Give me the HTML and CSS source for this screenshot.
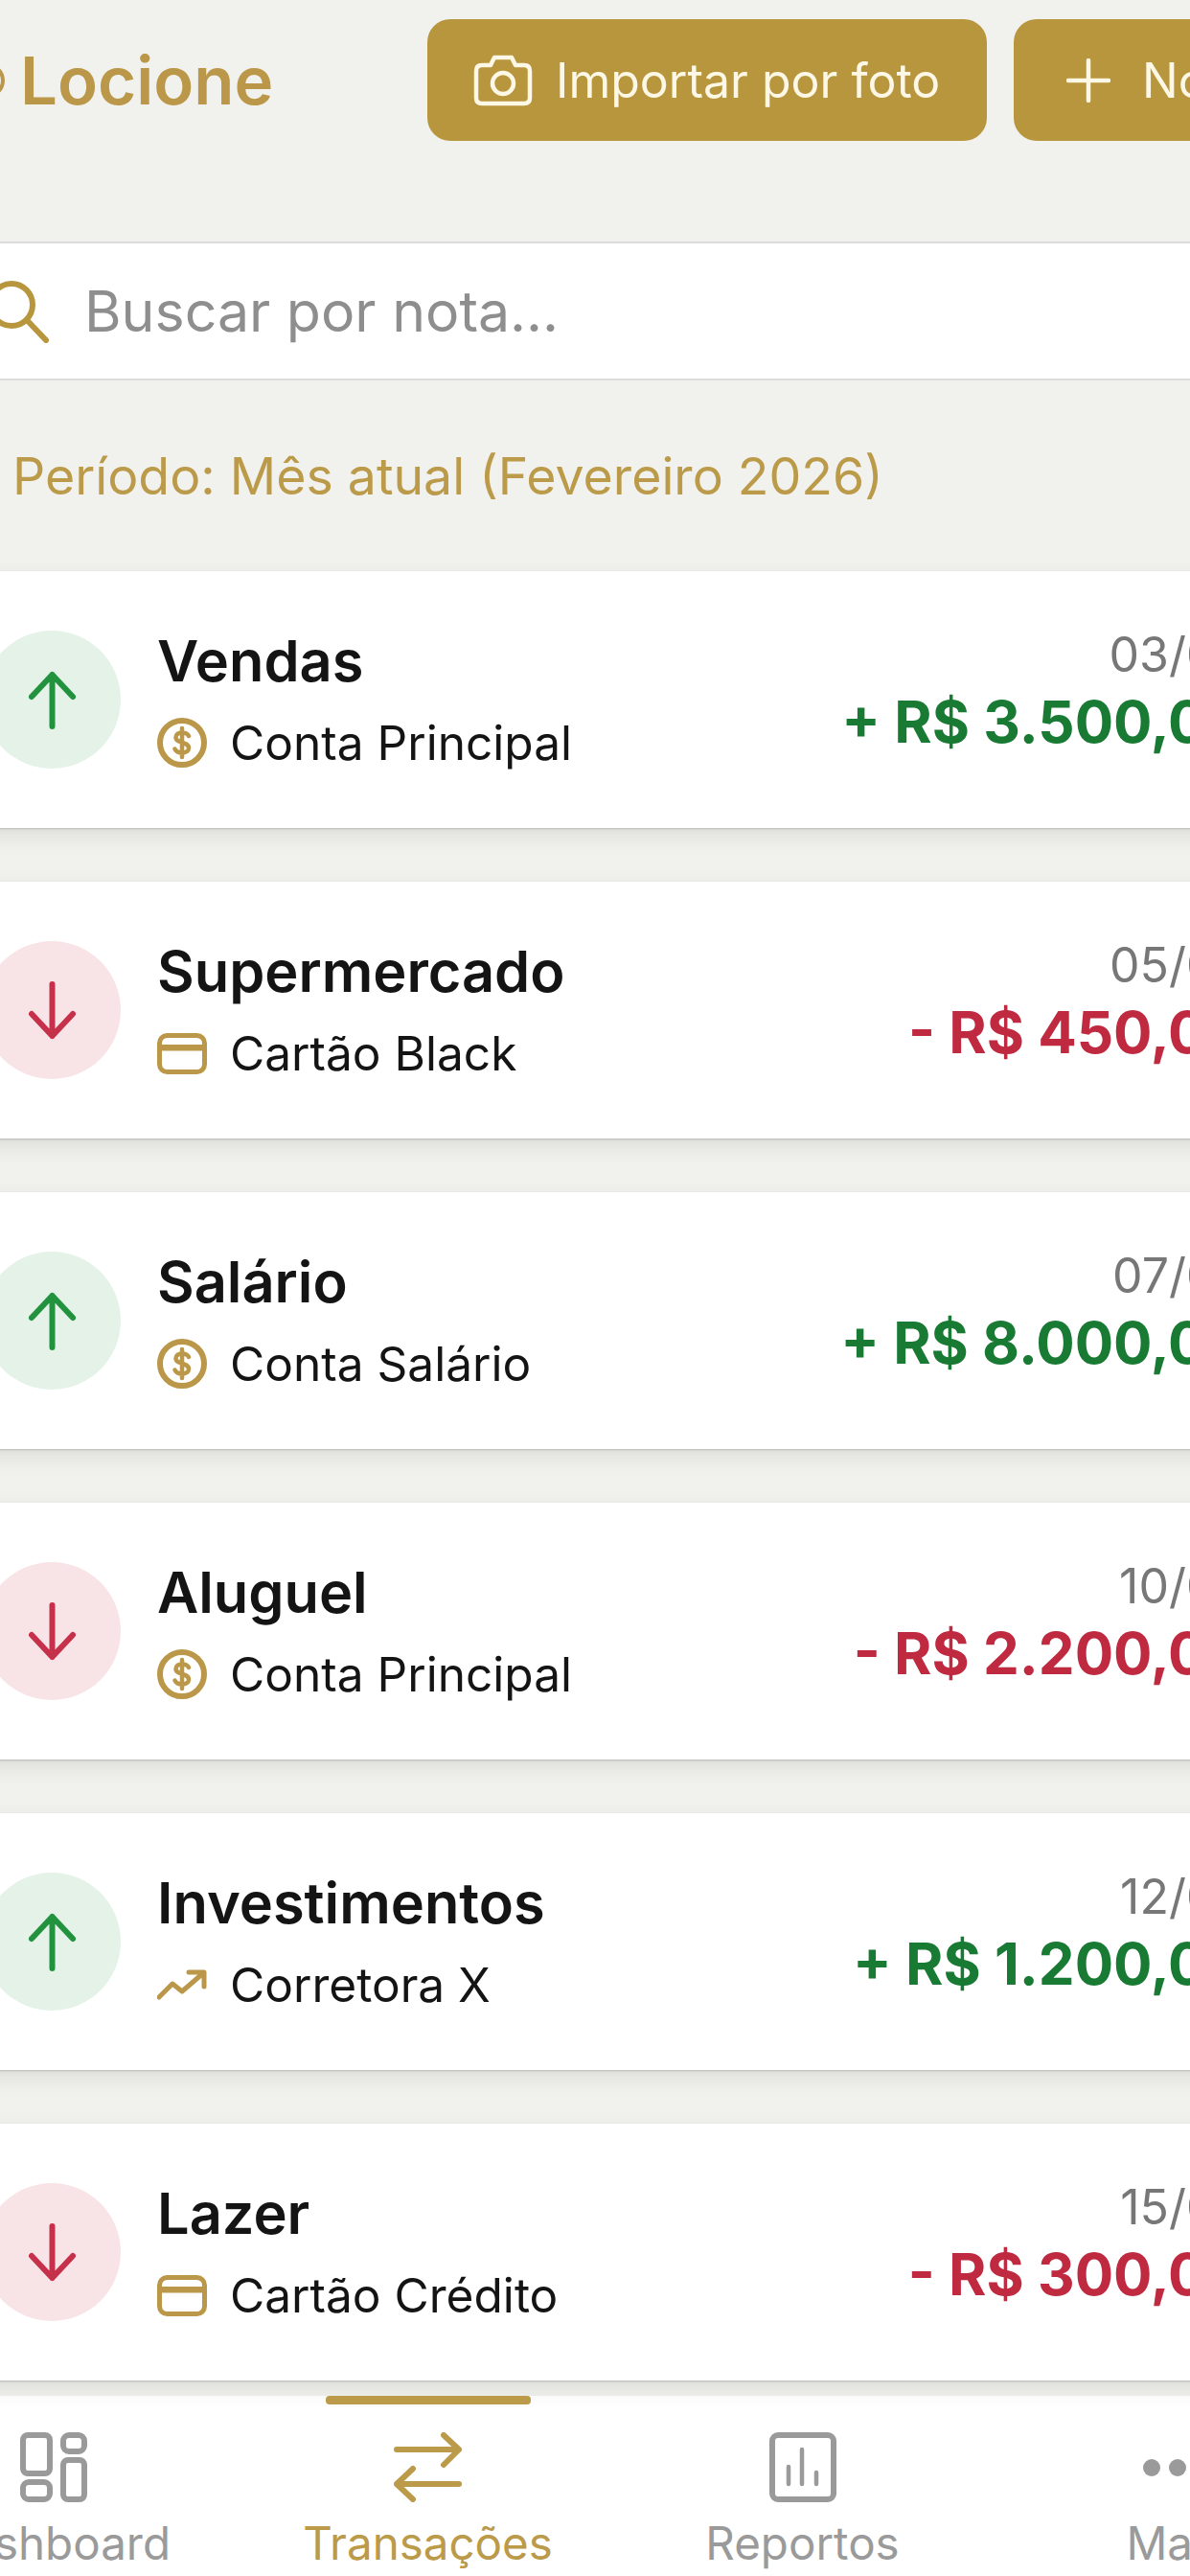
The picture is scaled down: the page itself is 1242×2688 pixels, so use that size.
FILE: index.html
```html
<!DOCTYPE html>
<html lang="pt-BR">
<head>
    <meta charset="UTF-8">
    <meta name="viewport" content="width=device-width, initial-scale=1.0">
    <title>Transações</title>
    <link rel="stylesheet" href="styles.css">
</head>
<body>

    <!-- shared icons -->
    <svg class="icon-defs" width="0" height="0">
        <symbol id="arrow-up" viewBox="0 0 49 61">
            <path d="M24.5 58V4M3 27L24.5 4L46 27" fill="none" stroke="currentColor" stroke-width="6" stroke-linecap="round" stroke-linejoin="round" />
        </symbol>
        <symbol id="arrow-down" viewBox="0 0 49 61">
            <path d="M24.5 3V57M3 34L24.5 57L46 34" fill="none" stroke="currentColor" stroke-width="6" stroke-linecap="round" stroke-linejoin="round" />
        </symbol>
        <symbol id="coin" viewBox="0 0 52 52">
            <circle cx="26" cy="26" r="23" fill="none" stroke="currentColor" stroke-width="6" />
            <path d="M33 19C31.5 16 29 15.500 26 15.500C22 15.500 19.500 17.500 19.500 20.500C19.500 27 33 24.500 33 31.500C33 34.500 30 36.500 26 36.500C22.500 36.500 20 35.500 18.500 32.500M26 11V41" fill="none" stroke="currentColor" stroke-width="4.500" stroke-linecap="round" />
        </symbol>
        <symbol id="card" viewBox="0 0 52 43">
            <rect x="2.500" y="2.500" width="47" height="38" rx="8" fill="none" stroke="currentColor" stroke-width="5" />
            <rect x="2.500" y="12" width="47" height="6.500" fill="currentColor" />
        </symbol>
        <symbol id="trend" viewBox="0 0 52 32">
            <path d="M2 29L16 15L26 23L48 4M33 3H49V18" fill="none" stroke="currentColor" stroke-width="5" stroke-linejoin="round" stroke-linecap="round" />
        </symbol>
    </svg>

    <header class="topbar">
        <div class="brand">
            <svg class="brand-mark" width="10" height="40" viewBox="0 0 10 40"><circle cx="-13" cy="20" r="16" fill="none" stroke="currentColor" stroke-width="4" /></svg>
            <span>Locione</span>
        </div>
        <button class="btn btn-photo" type="button">
            <svg width="62" height="54" viewBox="0 0 62 54" fill="none" stroke="currentColor" stroke-width="4.500" stroke-linejoin="round">
                <path d="M3 17C3 13 5 11 9 11H18L22 3H40L44 11H53C57 11 59 13 59 17V45C59 49 57 51 53 51H9C5 51 3 49 3 45Z" />
                <circle cx="31" cy="30" r="11" />
            </svg>
            Importar por foto
        </button>
        <button class="btn btn-new" type="button">
            <svg width="46" height="46" viewBox="0 0 46 46" fill="none" stroke="currentColor" stroke-width="4.500" stroke-linecap="round">
                <path d="M23 2V44M2 23H44" />
            </svg>
            Nova transação
        </button>
    </header>

    <div class="search">
        <svg class="search-icon" width="56" height="66" viewBox="0 0 56 66" fill="none" stroke="currentColor" stroke-width="6" stroke-linecap="round">
            <circle cx="16" cy="26" r="22" />
            <path d="M33 43L52 63" />
        </svg>
        <span class="search-text">Buscar por nota...</span>
    </div>

    <p class="period">Período: Mês atual (Fevereiro 2026)</p>

    <main class="list">
        <div class="card">
            <div class="badge up"><svg width="49" height="61"><use href="#arrow-up" /></svg></div>
            <div class="info">
                <div class="title">Vendas</div>
                <div class="account"><svg class="acc-icon" width="52" height="52"><use href="#coin" /></svg>Conta Principal</div>
            </div>
            <div class="side">
                <div class="date">03/02</div>
                <div class="amount plus">+ R$ 3.500,00</div>
            </div>
        </div>

        <div class="card">
            <div class="badge down"><svg width="49" height="61"><use href="#arrow-down" /></svg></div>
            <div class="info">
                <div class="title">Supermercado</div>
                <div class="account"><svg class="acc-icon" width="52" height="43"><use href="#card" /></svg>Cartão Black</div>
            </div>
            <div class="side">
                <div class="date">05/02</div>
                <div class="amount minus">- R$ 450,00</div>
            </div>
        </div>

        <div class="card">
            <div class="badge up"><svg width="49" height="61"><use href="#arrow-up" /></svg></div>
            <div class="info">
                <div class="title">Salário</div>
                <div class="account"><svg class="acc-icon" width="52" height="52"><use href="#coin" /></svg>Conta Salário</div>
            </div>
            <div class="side">
                <div class="date">07/02</div>
                <div class="amount plus">+ R$ 8.000,00</div>
            </div>
        </div>

        <div class="card">
            <div class="badge down"><svg width="49" height="61"><use href="#arrow-down" /></svg></div>
            <div class="info">
                <div class="title">Aluguel</div>
                <div class="account"><svg class="acc-icon" width="52" height="52"><use href="#coin" /></svg>Conta Principal</div>
            </div>
            <div class="side">
                <div class="date">10/02</div>
                <div class="amount minus">- R$ 2.200,00</div>
            </div>
        </div>

        <div class="card">
            <div class="badge up"><svg width="49" height="61"><use href="#arrow-up" /></svg></div>
            <div class="info">
                <div class="title">Investimentos</div>
                <div class="account"><svg class="acc-icon" width="52" height="32"><use href="#trend" /></svg>Corretora X</div>
            </div>
            <div class="side">
                <div class="date">12/02</div>
                <div class="amount plus">+ R$ 1.200,00</div>
            </div>
        </div>

        <div class="card">
            <div class="badge down"><svg width="49" height="61"><use href="#arrow-down" /></svg></div>
            <div class="info">
                <div class="title">Lazer</div>
                <div class="account"><svg class="acc-icon" width="52" height="43"><use href="#card" /></svg>Cartão Crédito</div>
            </div>
            <div class="side">
                <div class="date">15/02</div>
                <div class="amount minus">- R$ 300,00</div>
            </div>
        </div>
    </main>

    <nav class="tabs">
        <div class="tab">
            <span class="tab-bar"></span>
            <svg class="tab-icon" width="70" height="73" viewBox="0 0 70 73" fill="none" stroke="currentColor" stroke-width="6">
                <rect x="3" y="3" width="28" height="40" rx="5" />
                <rect x="45" y="3" width="22" height="17" rx="6" />
                <rect x="3" y="52" width="28" height="18" rx="6" />
                <rect x="45" y="29" width="22" height="41" rx="5" />
            </svg>
            <span class="tab-label">Dashboard</span>
        </div>
        <div class="tab active">
            <span class="tab-bar"></span>
            <svg class="tab-icon" width="71" height="73" viewBox="0 0 71 73" fill="none" stroke="currentColor" stroke-width="6" stroke-linecap="round" stroke-linejoin="round">
                <path d="M3 18H68M52 3L68 18L52 34" />
                <path d="M68 54H3M20 38L3 54L20 70" />
            </svg>
            <span class="tab-label">Transações</span>
        </div>
        <div class="tab">
            <span class="tab-bar"></span>
            <svg class="tab-icon" width="70" height="73" viewBox="0 0 70 73" fill="none" stroke="currentColor" stroke-linecap="round">
                <rect x="3" y="3" width="64" height="67" rx="6" stroke-width="6" />
                <path d="M20 36V54M34 18V54M49 42V54" stroke-width="4.500" />
            </svg>
            <span class="tab-label">Reportos</span>
        </div>
        <div class="tab">
            <span class="tab-bar"></span>
            <svg class="tab-icon" width="72" height="73" viewBox="0 0 72 73" fill="currentColor">
                <circle cx="9" cy="37" r="9" />
                <circle cx="36" cy="37" r="9" />
                <circle cx="63" cy="37" r="9" />
            </svg>
            <span class="tab-label">Mais</span>
        </div>
    </nav>

</body>
</html>
```

FILE: styles.css
```css
body {
    font-family: Inter, "Liberation Sans", sans-serif;
    margin: 0;
    width: 1242px;
    height: 2688px;
    overflow: hidden;
    background-color: #f1f1ed;
    color: #141414;
}

.icon-defs {
    display: block;
    height: 0;
}

/* header */
.topbar {
    display: flex;
    align-items: center;
    height: 127px;
    padding-top: 20px;
    width: 1700px;
}

.brand {
    display: flex;
    align-items: center;
    gap: 11px;
    width: 446px;
    font-size: 69px;
    font-weight: 600;
    color: #bb9749;
}

.brand-mark {
    flex: none;
    width: 10px;
}

.btn {
    display: flex;
    align-items: center;
    height: 127px;
    border: none;
    border-radius: 24px;
    background-color: #b8963e;
    color: #fdf8e6;
    font-family: inherit;
    font-size: 50px;
    white-space: nowrap;
}

.btn-photo {
    width: 584px;
    padding: 0 0 0 48px;
    gap: 24px;
}

.btn-new {
    margin-left: 28px;
    padding: 0 48px 0 55px;
    gap: 33px;
}

/* search */
.search {
    display: flex;
    align-items: center;
    height: 141px;
    margin-top: 105px;
    margin-left: -4px;
    background-color: #fff;
    border-top: 2px solid #dcdcdc;
    border-bottom: 2px solid #dcdcdc;
}

.search-icon {
    flex: none;
    color: #b8963e;
    width: 56px;
    margin-left: 0;
}

.search-text {
    margin-left: 36px;
    font-size: 59px;
    color: #8e8e8e;
}

.period {
    display: flex;
    align-items: center;
    height: 199px;
    margin: 0;
    padding-left: 13px;
    font-size: 53.6px;
    color: #bb9a4a;
}

/* transaction cards */
.list {
    display: flex;
    flex-direction: column;
    gap: 56px;
    margin-left: -58px;
    width: 1398px;
}

.card {
    display: flex;
    align-items: center;
    height: 268px;
    box-sizing: border-box;
    padding: 0 40px;
    background-color: #fff;
    box-shadow: 0 1px 2px rgba(0, 0, 0, 0.18), 0 8px 22px rgba(0, 0, 0, 0.09);
}

.badge {
    display: flex;
    align-items: center;
    justify-content: center;
    flex: none;
    width: 144px;
    height: 144px;
    border-radius: 50%;
}

.badge.up {
    background-color: #e4f2e8;
    color: #23923f;
}

.badge.down {
    background-color: #f8e4e6;
    color: #c5304a;
}

.info {
    margin-left: 38px;
}

.title {
    font-size: 59.5px;
    font-weight: 600;
    line-height: 70px;
}

.account {
    display: flex;
    align-items: center;
    height: 62px;
    margin-top: 20px;
    font-size: 49.6px;
}

.acc-icon {
    flex: none;
    margin-right: 24px;
    color: #bb9749;
}

.side {
    display: flex;
    flex-direction: column;
    align-items: flex-end;
    margin-left: auto;
    margin-top: -16px;
}

.date {
    font-size: 50px;
    line-height: 56px;
    color: #777;
}

.amount {
    font-size: 60px;
    font-weight: 700;
    line-height: 72px;
    margin-top: 6px;
}

.plus {
    color: #187a33;
}

.minus {
    color: #bf2a41;
}

/* bottom tabs */
.tabs {
    display: flex;
    height: 188px;
    margin-top: 16px;
    margin-left: -140px;
    width: 1564px;
    background-color: #fff;
}

.tab {
    display: flex;
    flex-direction: column;
    align-items: center;
    width: 391px;
    color: #9a9a9a;
}

.tab-bar {
    display: block;
    width: 214px;
    height: 9px;
    border-radius: 4px;
}

.tab-icon {
    margin-top: 29px;
}

.tab-label {
    margin-top: 15px;
    font-size: 47.5px;
    line-height: 56px;
}

.tab.active {
    color: #bb9a4a;
}

.tab.active .tab-bar {
    background-color: #bb9a4a;
}
```
